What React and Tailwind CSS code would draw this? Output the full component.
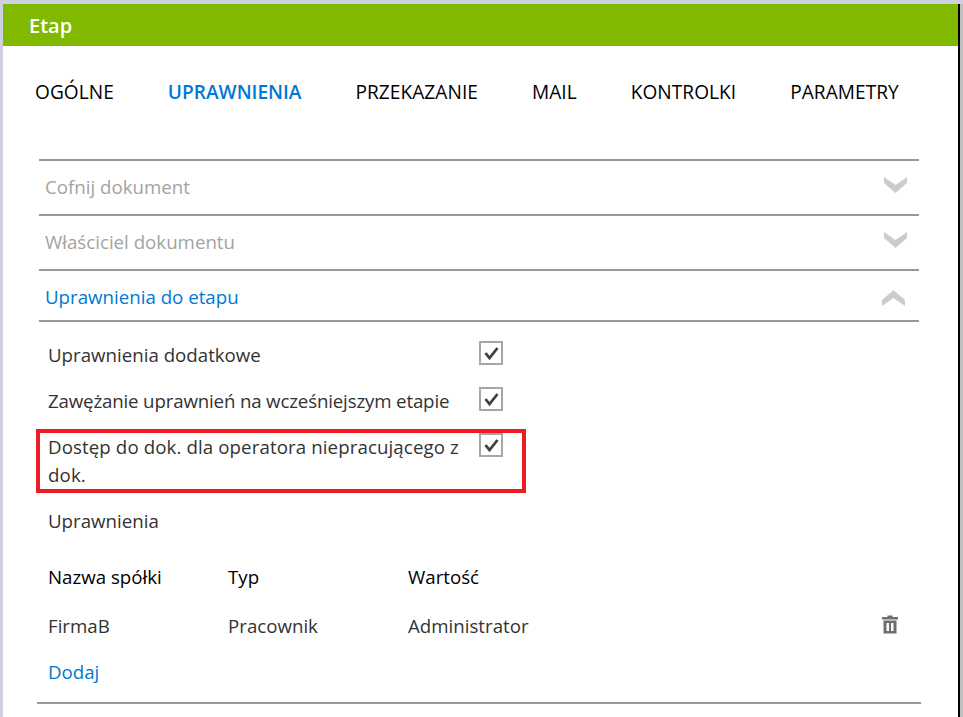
import React from 'react'

const Chevron = ({ up }) => (
  <svg width="23" height="16" viewBox="0 0 23 16" className={up ? 'block mt-[4px]' : 'block -mt-[5px] ml-[1px]'}>
    <path d={up ? 'M0 10 L11.5 0 L23 10 L23 16 L11.5 8 L0 16 Z' : 'M0 0 L11.5 8 L23 0 L23 6 L11.5 16 L0 6 Z'} fill="#cccccc" />
  </svg>
)

const Check = () => (
  <div className="w-6 h-6 border-2 border-[#a6a6a6] flex items-center justify-center shrink-0">
    <svg width="16" height="14" viewBox="0 0 16 14">
      <path d="M2.5 7 L6.5 12 L14.5 2" fill="none" stroke="#404040" strokeWidth="2.8" />
    </svg>
  </div>
)

const Trash = () => (
  <svg width="16" height="19" viewBox="0 0 16 19" className="block mb-[4px]">
    <path d="M5.5 0.5 H10.5 V2 H16 V4.5 H0 V2 H5.5 Z" fill="#6e6e6e" />
    <path d="M1.5 5.5 H14.5 V18.5 H1.5 Z M4.5 8 V16 H7 V8 Z M9 8 V16 H11.5 V8 Z" fill="#6e6e6e" fillRule="evenodd" />
  </svg>
)

const tabs = ['OGÓLNE', 'UPRAWNIENIA', 'PRZEKAZANIE', 'MAIL', 'KONTROLKI', 'PARAMETRY']

const Section = ({ title, active, up }) => (
  <div className={`${up ? 'h-[51px] pr-[14px]' : 'h-[55px] pr-[12px]'} border-t-2 border-[#999999] flex items-center justify-between pl-[6px]`}>
    <span className={`${active ? 'text-[#0078d4] mt-[4px]' : 'text-[#a3a3a3]'} text-[18.7px]`}>{title}</span>
    <Chevron up={up} />
  </div>
)

const CheckRow = ({ label, className }) => (
  <div className={`flex justify-between w-[455px] ${className}`}>
    <span className="w-[425px] leading-[28px]">{label}</span>
    <Check />
  </div>
)

const Row = ({ cells, className }) => (
  <div className={`flex leading-[28px] ${className}`}>
    {cells.map(c => <span key={c} className="w-[180px]">{c}</span>)}
  </div>
)

export default function App() {
  return (
    <div className="relative h-[717px] bg-[#bfbfbf] overflow-hidden font-['Open_Sans',sans-serif]">
      <div className="h-1 bg-[#cdd0e0]" />
      <div className="flex h-[713px]">
        <div className="w-[3px] bg-[#cdd0e0]" />
        <div className="w-[957px] bg-white border-r-2 border-black">
          <div className="h-[42px] bg-[#80b900] text-white text-[20px] font-semibold flex items-center pl-[26px] pt-[2px]">Etap</div>
          <div className="flex gap-[54px] pl-[32px] pt-[32px] text-[19.1px] text-black leading-[28px]">
            {tabs.map(t => (
              <span key={t} className={t === 'UPRAWNIENIA' ? 'text-[#0078d4] font-semibold' : 'tracking-[0.05px]'}>{t}</span>
            ))}
          </div>
          <div className="w-[880px] ml-[36px] mt-[53px]">
            <Section title="Cofnij dokument" />
            <Section title="Właściciel dokumentu" />
            <Section title="Uprawnienia do etapu" active up />
            <div className="border-t-2 border-[#999999] text-[18.7px] text-[#333333] pl-[9px] pt-[19px]">
              <CheckRow label="Uprawnienia dodatkowe" />
              <CheckRow label={<span className="tracking-[-0.16px]">Zawężanie uprawnień na wcześniejszym etapie</span>} className="mt-[18px]" />
              <CheckRow label={<span className="tracking-[0.1px]">Dostęp do dok. dla operatora niepracującego z dok.</span>} className="mt-[18px]" />
              <div className="mt-[18px] leading-[28px]">Uprawnienia</div>
              <Row cells={['Nazwa spółki', 'Typ', 'Wartość']} className="mt-[28px] text-black" />
              <div className="flex items-center justify-between mt-[21px] pr-[21px]">
                <Row cells={['FirmaB', 'Pracownik', 'Administrator']} />
                <Trash />
              </div>
              <div className="mt-[18px] leading-[28px] text-[#0078d4]">Dodaj</div>
            </div>
          </div>
          <div className="h-[2px] w-[884px] ml-[34px] mt-[16px] bg-[#999999]" />
        </div>
      </div>
      <div className="absolute left-[36px] top-[429px] w-[490px] h-[64px] border-4 border-[#ed1c24]" />
    </div>
  )
}
